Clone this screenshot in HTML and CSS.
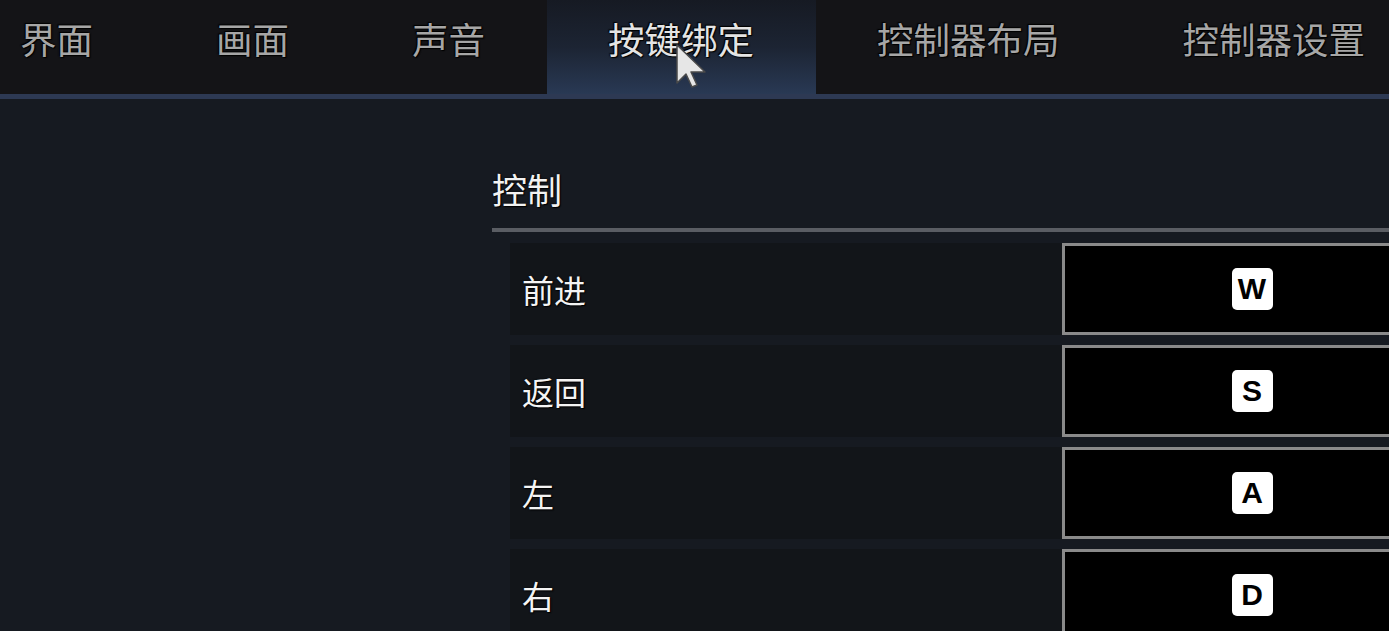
FILE: index.html
```html
<!DOCTYPE html>
<html lang="zh-CN">
<head>
<meta charset="utf-8">
<title>按键绑定</title>
<link rel="stylesheet" href="styles.css">
</head>
<body>
<div class="page">
  <nav class="tabs">
    <div class="tab">界面</div>
    <div class="tab">画面</div>
    <div class="tab">声音</div>
    <div class="tab active">按键绑定</div>
    <div class="tab">控制器布局</div>
    <div class="tab">控制器设置</div>
  </nav>
  <main class="content">
    <section class="section">
      <h2 class="section-title">控制</h2>
      <div class="rows">
        <div class="row"><div class="label">前进</div><div class="bind"><span class="key">W</span></div></div>
        <div class="row"><div class="label">返回</div><div class="bind"><span class="key">S</span></div></div>
        <div class="row"><div class="label">左</div><div class="bind"><span class="key">A</span></div></div>
        <div class="row"><div class="label">右</div><div class="bind"><span class="key">D</span></div></div>
      </div>
    </section>
  </main>
  <svg class="cursor" width="36" height="46" viewBox="0 0 36 46">
    <path d="M2 2 L2 40 L11 31 L17 44 L22 42 L16 29 L30 29 Z" fill="#e6e6e6" stroke="#4a4a4a" stroke-width="1.5" stroke-linejoin="round"/>
  </svg>
</div>
</body>
</html>
```
FILE: styles.css
```css
html, body {
  margin: 0;
  padding: 0;
  background: #161a21;
  overflow: hidden;
}
.page {
  position: relative;
  width: 1389px;
  height: 631px;
  overflow: hidden;
  font-family: "Noto Sans CJK SC", "Noto Sans", sans-serif;
}
.tabs {
  display: flex;
  height: 94px;
  background: #141417;
  border-bottom: 5px solid #2d3953;
  margin-left: -41px;
}
.tab {
  padding: 0 62px 16px 61px;
  display: flex;
  align-items: center;
  font-size: 36.5px;
  line-height: 1;
  color: #a6a6a6;
  text-shadow: 0 0 2px #000, 1px 1px 1px #000, -1px -1px 1px #000;
  white-space: nowrap;
}
.tab.active {
  color: #e4e4e4;
  background: linear-gradient(to bottom, #161a23 0%, #1c2433 50%, #293954 100%);
}
.content {
  padding-left: 492px;
}
.section-title {
  margin: 0;
  padding-top: 66px;
  padding-bottom: 15px;
  height: 48px;
  line-height: 48px;
  font-size: 35px;
  font-weight: normal;
  color: #f2f2f2;
  text-shadow: 0 0 2px #000, 1px 1px 1px #000;
  border-bottom: 4px solid #5a5d63;
}
.rows {
  padding-left: 18px;
  padding-top: 11px;
  display: flex;
  flex-direction: column;
  gap: 10px;
}
.row {
  display: flex;
  height: 92px;
}
.label {
  flex: 0 0 540px;
  padding-left: 12px;
  display: flex;
  align-items: center;
  background: #121519;
  font-size: 32px;
  color: #f4f4f4;
  text-shadow: 0 0 2px #000, 1px 1px 1px #000;
}
.bind {
  flex: 0 0 380px;
  box-sizing: border-box;
  background: #000;
  border: 3px solid #8a8a8a;
  display: flex;
  align-items: center;
  justify-content: center;
}
.key {
  display: flex;
  align-items: center;
  justify-content: center;
  width: 41px;
  height: 42px;
  background: #fff;
  border-radius: 5px;
  color: #000;
  font-family: "Liberation Sans", Arial, sans-serif;
  font-weight: bold;
  font-size: 30px;
  line-height: 1;
}
.cursor {
  position: absolute;
  left: 675px;
  top: 43px;
}
```
